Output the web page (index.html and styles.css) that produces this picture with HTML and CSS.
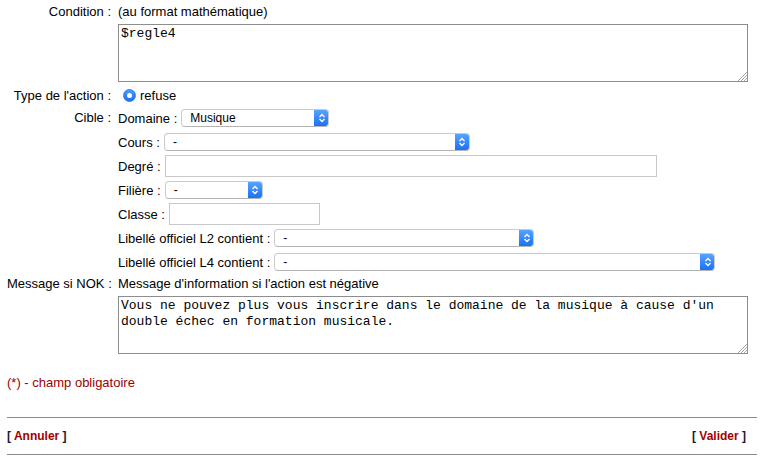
FILE: index.html
```html
<!DOCTYPE html>
<html lang="fr">
<head>
<meta charset="utf-8">
<title>Règle</title>
<link rel="stylesheet" href="styles.css">
</head>
<body>
<div class="form">
  <div class="lbl l-cond">Condition :</div>
  <div class="val">
    <div class="hint">(au format mathématique)</div>
    <div class="ta-wrap">
      <textarea class="ta">$regle4</textarea>
      <svg class="grip" width="10" height="10" viewBox="0 0 10 10"><path d="M10 1 L1 10 M10 4 L4 10 M10 7 L7 10" stroke="#a8a8a8" stroke-width="1"/></svg>
    </div>
  </div>

  <div class="lbl l-type">Type de l'action :</div>
  <div class="val v-type"><span class="radio"><span class="dot"></span></span><span>refuse</span></div>

  <div class="lbl l-cible">Cible :</div>
  <div class="val v-cible">
    <div class="crow">Domaine :
      <span class="sel w-dom"><span class="sel-v">Musique</span><span class="sel-b"><svg width="8" height="12" viewBox="0 0 8 12"><path d="M1.5 5 L4 2.5 L6.5 5 M1.5 7 L4 9.5 L6.5 7" stroke="#fff" stroke-width="1.3" fill="none"/></svg></span></span>
    </div>
    <div class="crow">Cours :
      <span class="sel w-cours"><span class="sel-v">-</span><span class="sel-b"><svg width="8" height="12" viewBox="0 0 8 12"><path d="M1.5 5 L4 2.5 L6.5 5 M1.5 7 L4 9.5 L6.5 7" stroke="#fff" stroke-width="1.3" fill="none"/></svg></span></span>
    </div>
    <div class="crow">Degré :
      <input class="inp w-degre" type="text">
    </div>
    <div class="crow">Filière :
      <span class="sel w-fil"><span class="sel-v">-</span><span class="sel-b"><svg width="8" height="12" viewBox="0 0 8 12"><path d="M1.5 5 L4 2.5 L6.5 5 M1.5 7 L4 9.5 L6.5 7" stroke="#fff" stroke-width="1.3" fill="none"/></svg></span></span>
    </div>
    <div class="crow">Classe :
      <input class="inp w-classe" type="text">
    </div>
    <div class="crow">Libellé officiel L2 contient :
      <span class="sel w-l2"><span class="sel-v">-</span><span class="sel-b"><svg width="8" height="12" viewBox="0 0 8 12"><path d="M1.5 5 L4 2.5 L6.5 5 M1.5 7 L4 9.5 L6.5 7" stroke="#fff" stroke-width="1.3" fill="none"/></svg></span></span>
    </div>
    <div class="crow">Libellé officiel L4 contient :
      <span class="sel w-l4"><span class="sel-v">-</span><span class="sel-b"><svg width="8" height="12" viewBox="0 0 8 12"><path d="M1.5 5 L4 2.5 L6.5 5 M1.5 7 L4 9.5 L6.5 7" stroke="#fff" stroke-width="1.3" fill="none"/></svg></span></span>
    </div>
  </div>

  <div class="lbl l-msg">Message si NOK :</div>
  <div class="val v-msg">
    <div class="hint">Message d'information si l'action est négative</div>
    <div class="ta-wrap">
      <textarea class="ta">Vous ne pouvez plus vous inscrire dans le domaine de la musique à cause d'un double échec en formation musicale.</textarea>
      <svg class="grip" width="10" height="10" viewBox="0 0 10 10"><path d="M10 1 L1 10 M10 4 L4 10 M10 7 L7 10" stroke="#a8a8a8" stroke-width="1"/></svg>
    </div>
  </div>
</div>

<div class="oblig">(*) - champ obligatoire</div>

<hr class="sep sep1">
<div class="actions">
  <span class="btn"><span class="br">[</span> <a href="#" class="lnk">Annuler</a> <span class="br">]</span></span>
  <span class="btn btn-right"><span class="br">[</span> <a href="#" class="lnk">Valider</a> <span class="br">]</span></span>
</div>
<hr class="sep sep2">
</body>
</html>
```

FILE: styles.css
```css
html, body {
  margin: 0;
  padding: 0;
  background: #fff;
}
body {
  padding: 5px 7px 0 7px;
  font-family: "Liberation Sans", Arial, sans-serif;
  font-size: 13px;
  color: #000;
}
.form {
  display: grid;
  grid-template-columns: 104px 1fr;
  column-gap: 7px;
  align-items: start;
}
.lbl {
  text-align: right;
  white-space: nowrap;
}
.l-cond, .hint {
  line-height: 14px;
}
.ta-wrap {
  position: relative;
  width: 630px;
  height: 58px;
  margin-top: 5px;
}
.ta {
  display: block;
  box-sizing: border-box;
  width: 630px;
  height: 58px;
  margin: 0;
  padding: 1px 2px;
  border: 1px solid #8d8d8d;
  font-family: "Liberation Mono", "Courier New", monospace;
  font-size: 13px;
  line-height: 16px;
  color: #000;
  resize: none;
  overflow: hidden;
  background: #fff;
}
.grip {
  position: absolute;
  right: 1px;
  bottom: 1px;
}
.l-type, .v-type {
  margin-top: 3px;
  line-height: 21px;
  height: 21px;
}
.v-type {
  display: flex;
  align-items: center;
  gap: 4px;
  padding-left: 5px;
}
.radio {
  width: 13px;
  height: 13px;
  border-radius: 50%;
  background: linear-gradient(#4c9bfa, #1d6fe8);
  display: flex;
  align-items: center;
  justify-content: center;
  box-sizing: border-box;
  border: 1px solid #2f7ce9;
}
.dot {
  width: 5px;
  height: 5px;
  border-radius: 50%;
  background: #fff;
}
.l-cible {
  line-height: 23px;
}
.v-cible {
  display: flex;
  flex-direction: column;
}
.crow {
  height: 24px;
  display: flex;
  align-items: center;
  gap: 4px;
  white-space: nowrap;
}
.sel {
  display: inline-flex;
  box-sizing: border-box;
  height: 18px;
  border: 1px solid #cbcbcb;
  border-bottom-color: #b4b4b4;
  border-radius: 4px;
  background: #fff;
  font-size: 12px;
  overflow: hidden;
}
.sel-v {
  flex: 1;
  padding-left: 8px;
  line-height: 16px;
}
.sel-b {
  width: 15px;
  margin: -1px -1px -1px 0;
  background: linear-gradient(#59a6ff, #166ef5);
  border-radius: 0 4px 4px 0;
  display: flex;
  align-items: center;
  justify-content: center;
}
.w-dom { width: 148px; }
.w-cours { width: 306px; }
.w-fil { width: 98px; }
.w-l2 { width: 260px; }
.w-l4 { width: 441px; }
.inp {
  box-sizing: border-box;
  height: 22px;
  margin: 0;
  padding: 0 3px;
  border: 1px solid #c8c8c8;
  background: #fff;
  font-family: inherit;
  font-size: 12px;
}
.w-degre { width: 492px; }
.w-classe { width: 151px; }
.l-msg, .v-msg {
  margin-top: 3px;
}
.l-msg {
  line-height: 14px;
}
.oblig {
  margin-top: 22px;
  line-height: 14px;
  color: #9c0000;
}
.sep {
  margin: 0;
  border: 0;
  border-top: 1px solid #8a8a8a;
  height: 0;
}
.sep1 {
  margin-top: 27px;
}
.actions {
  display: flex;
  justify-content: space-between;
  margin-top: 11px;
  line-height: 14px;
  font-size: 12px;
  font-weight: bold;
}
.btn-right {
  margin-right: 11px;
}
.br {
  color: #1a1a2e;
}
.lnk {
  color: #a30000;
  text-decoration: none;
}
.sep2 {
  margin-top: 11px;
}
```
